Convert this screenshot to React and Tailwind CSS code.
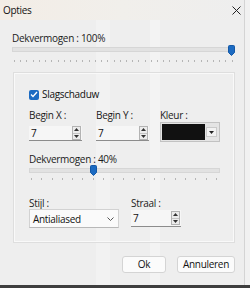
import React from "react";

const font = { fontFamily: '"Open Sans","Noto Sans",sans-serif' };

function Ticks({ count, className }) {
  return (
    <div className={"flex justify-between " + className}>
      {Array.from({ length: count }).map((_, i) => (
        <div key={i} className="w-px h-[2px] bg-[#b5b5b5]" />
      ))}
    </div>
  );
}

function Thumb() {
  return (
    <svg width="7" height="11" viewBox="0 0 7 11" className="block">
      <path d="M0.5 1.5 Q0.5 0.5 1.5 0.5 H5.5 Q6.5 0.5 6.5 1.5 V7.5 L3.5 10.5 L0.5 7.5 Z" fill="#1c6bc2" stroke="#1559a6" strokeWidth="1" />
    </svg>
  );
}

function Spin() {
  return (
    <div className="flex flex-col w-[9px] h-[14px] border border-[#b3b3b3] bg-[#ececec]">
      <div className="flex-1 flex items-center justify-center border-b border-[#c4c4c4]">
        <svg width="5" height="3" viewBox="0 0 5 3" className="block"><path d="M0 3 L2.5 0 L5 3Z" fill="#333" /></svg>
      </div>
      <div className="flex-1 flex items-center justify-center">
        <svg width="5" height="3" viewBox="0 0 5 3" className="block"><path d="M0 0 L2.5 3 L5 0Z" fill="#333" /></svg>
      </div>
    </div>
  );
}

function NumField({ label, width, labelH, inputH }) {
  return (
    <div className="flex flex-col">
      <div className={"text-[10px] leading-[12px] text-[#1b1b1b] " + labelH}>{label}</div>
      <div className={"flex items-center bg-[#f6f6f6] border-b border-[#8c8c8c] pl-[2px] pr-[1px] " + width + " " + inputH}>
        <span className="flex-1 text-[10px] leading-[12px] text-[#111]">7</span>
        <Spin />
      </div>
    </div>
  );
}

export default function App() {
  return (
    <div className="w-[250px] h-[288px] bg-[#f2f2f2] flex flex-col overflow-hidden tracking-[-0.3px]" style={font}>
      <div className="flex flex-1">
        <div className="w-[245px] relative bg-[#eeeeee] border-r border-[#d4d4d4] flex flex-col">
          <div className="absolute top-0 bottom-0 left-[150px] w-[10px] bg-[#f7f7f7] opacity-60" />
          <div className="absolute top-0 bottom-0 left-[96px] w-[14px] bg-[#f5f5f5] opacity-50" />
          <div className="relative h-[20px] flex items-center justify-between pl-[3px] pr-[3px] bg-gradient-to-r from-[#f3ede6] via-[#f1efeb] to-[#eeeeee]">
            <span className="text-[10px] text-[#111]">Opties</span>
            <svg width="9" height="9" viewBox="0 0 9 9" className="block"><path d="M0.5 0.5 L8.5 8.5 M8.5 0.5 L0.5 8.5" stroke="#222" strokeWidth="1" /></svg>
          </div>
          <div className="relative pl-[12px] pr-[9px] pt-[12px]">
            <div className="text-[10px] leading-[13px] text-[#1b1b1b]">Dekvermogen : 100%</div>
            <div className="relative h-[11px]">
              <div className="absolute left-0 right-[2px] top-[2px] h-[5px] bg-[#e2e2e2] border border-[#d6d6d6]" />
              <div className="absolute right-0 top-0"><Thumb /></div>
            </div>
            <Ticks count={36} className="mt-[4px] pl-[2px] pr-[2px]" />
          </div>
          <div className="relative ml-[13px] mr-[9px] mt-[10px] border border-[#dedede] shadow-[inset_0_0_0_1px_#f9f9f9] pl-[15px] pr-[14px] pt-[15px] pb-[14px] flex flex-col">
            <div className="flex items-center gap-[3px] h-[13px]">
              <div className="w-[10px] h-[10px] rounded-[2px] bg-[#1c6bc2] flex items-center justify-center">
                <svg width="8" height="7" viewBox="0 0 8 7" className="block"><path d="M1 3.5 L3 5.5 L7 1" stroke="#fff" strokeWidth="1.3" fill="none" /></svg>
              </div>
              <span className="text-[10px] leading-[13px] text-[#111]">Slagschaduw</span>
            </div>
            <div className="flex mt-[8px]">
              <NumField label="Begin X :" width="w-[53px]" labelH="h-[17px]" inputH="h-[15px]" />
              <div className="ml-[14px]"><NumField label="Begin Y :" width="w-[53px]" labelH="h-[17px]" inputH="h-[15px]" /></div>
              <div className="ml-[11px] flex flex-col">
                <div className="text-[10px] leading-[12px] text-[#1b1b1b] h-[13px]">Kleur :</div>
                <div className="flex items-center w-[60px] h-[20px] border border-[#c2c2c2] bg-[#e4e4e4] pl-[1px] pr-[2px] py-[1px] gap-[1px]">
                  <div className="flex-1 h-full bg-[#111111]" />
                  <div className="w-[11px] h-[10px] bg-[#f2f2f2] border border-[#cacaca] flex items-center justify-center">
                    <svg width="5" height="3" viewBox="0 0 5 3" className="block"><path d="M0 0 L2.5 3 L5 0Z" fill="#222" /></svg>
                  </div>
                </div>
              </div>
            </div>
            <div className="text-[10px] leading-[12px] text-[#1b1b1b] mt-[11px]">Dekvermogen : 40%</div>
            <div className="relative h-[11px] w-[191px]">
              <div className="absolute left-0 right-0 top-[3px] h-[5px] bg-[#e2e2e2] border border-[#d6d6d6]" />
              <div className="absolute left-[61px] top-0"><Thumb /></div>
            </div>
            <Ticks count={19} className="mt-[2px] w-[191px] pl-[2px] pr-[3px]" />
            <div className="flex mt-[17px]">
              <div className="flex flex-col">
                <div className="text-[10px] leading-[12px] text-[#1b1b1b] h-[12px]">Stijl :</div>
                <div className="flex items-center justify-between w-[90px] h-[19px] bg-[#fafafa] border border-[#d2d2d2] border-b-[#b8b8b8] pl-[3px] pr-[4px]">
                  <span className="text-[10px] leading-[12px] text-[#111]">Antialiased</span>
                  <svg width="7" height="4" viewBox="0 0 7 4" className="block"><path d="M0.5 0.5 L3.5 3.5 L6.5 0.5" stroke="#555" strokeWidth="1" fill="none" /></svg>
                </div>
              </div>
              <div className="ml-[12px]"><NumField label="Straal :" width="w-[50px]" labelH="h-[13px]" inputH="h-[17px]" /></div>
            </div>
          </div>
          <div className="relative flex justify-end gap-[11px] pr-[9px] mt-[13px]">
            <div className="w-[44px] h-[17px] bg-[#fbfbfb] border border-[#d4d4d4] rounded-[3px] flex items-center justify-center text-[10px] text-[#111]">Ok</div>
            <div className="w-[58px] h-[17px] bg-[#fbfbfb] border border-[#d4d4d4] rounded-[3px] flex items-center justify-center text-[10px] text-[#111]">Annuleren</div>
          </div>
          <div className="flex-1" />
        </div>
        <div className="flex-1 bg-[#f1f1f1]" />
      </div>
      <div className="h-[3px] bg-[#3e3e3e]" />
    </div>
  );
}
